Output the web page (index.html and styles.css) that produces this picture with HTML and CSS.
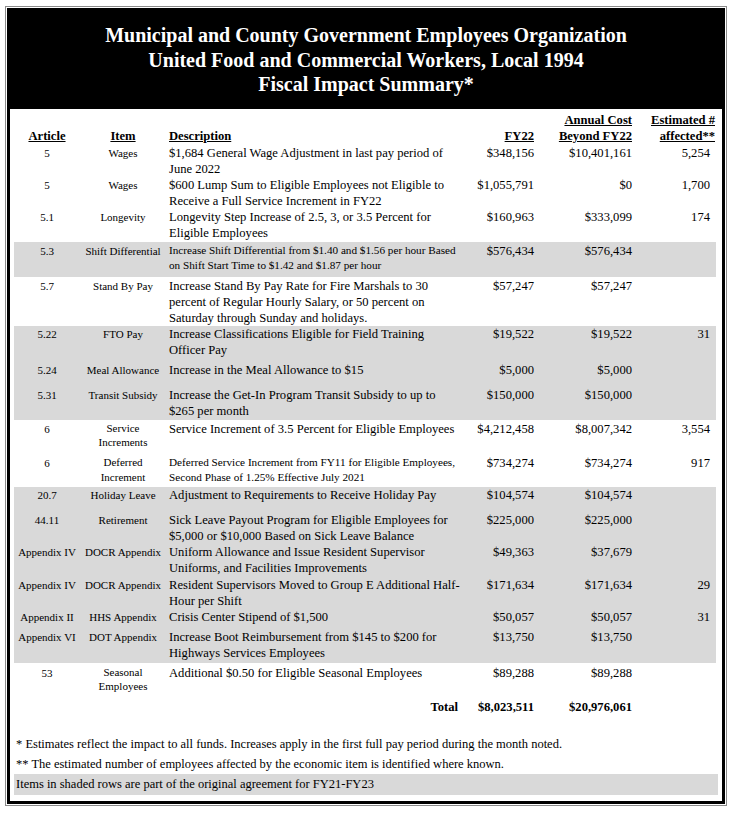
FILE: index.html
```html
<!DOCTYPE html>
<html>
<head>
<meta charset="utf-8">
<link rel="stylesheet" href="styles.css">
</head>
<body>
<div class="frame">
  <div class="box">
    <div class="title">
      <div>Municipal and County Government Employees Organization</div>
      <div>United Food and Commercial Workers, Local 1994</div>
      <div>Fiscal Impact Summary*</div>
    </div>
    <table class="fis">
      <colgroup>
        <col class="c-art"><col class="c-item"><col class="c-desc"><col class="c-fy"><col class="c-ann"><col class="c-est">
      </colgroup>
      <thead>
        <tr class="hdr">
          <th class="ctr"><u>Article</u></th>
          <th class="ctr"><u>Item</u></th>
          <th class="lft"><u>Description</u></th>
          <th class="num"><u>FY22</u></th>
          <th class="num"><u>Annual Cost</u><br><u>Beyond FY22</u></th>
          <th class="num est-h"><u>Estimated #</u><br><u>affected**</u></th>
        </tr>
      </thead>
      <tbody>
        <tr class="r32">
          <td class="sm ctr">5</td><td class="sm ctr">Wages</td>
          <td class="desc">$1,684 General Wage Adjustment in last pay period of<br>June 2022</td>
          <td class="num">$348,156</td><td class="num">$10,401,161</td><td class="num est">5,254</td>
        </tr>
        <tr class="r32">
          <td class="sm ctr">5</td><td class="sm ctr">Wages</td>
          <td class="desc">$600 Lump Sum to Eligible Employees not Eligible to<br>Receive a Full Service Increment in FY22</td>
          <td class="num">$1,055,791</td><td class="num">$0</td><td class="num est">1,700</td>
        </tr>
        <tr class="r33">
          <td class="sm ctr">5.1</td><td class="sm ctr">Longevity</td>
          <td class="desc">Longevity Step Increase of 2.5, 3, or 3.5 Percent for<br>Eligible Employees</td>
          <td class="num">$160,963</td><td class="num">$333,099</td><td class="num est">174</td>
        </tr>
        <tr class="r35 shade p1">
          <td class="sm ctr">5.3</td><td class="sm ctr">Shift Differential</td>
          <td class="desc dsm">Increase Shift Differential from $1.40 and $1.56 per hour Based<br>on Shift Start Time to $1.42 and $1.87 per hour</td>
          <td class="num">$576,434</td><td class="num">$576,434</td><td class="num est"></td>
        </tr>
        <tr class="r49 p1">
          <td class="sm ctr">5.7</td><td class="sm ctr">Stand By Pay</td>
          <td class="desc">Increase Stand By Pay Rate for Fire Marshals to 30<br>percent of Regular Hourly Salary, or 50 percent on<br>Saturday through Sunday and holidays.</td>
          <td class="num">$57,247</td><td class="num">$57,247</td><td class="num est"></td>
        </tr>
        <tr class="r33 shade">
          <td class="sm ctr">5.22</td><td class="sm ctr">FTO Pay</td>
          <td class="desc">Increase Classifications Eligible for Field Training<br>Officer Pay</td>
          <td class="num">$19,522</td><td class="num">$19,522</td><td class="num est">31</td>
        </tr>
        <tr class="r27 shade p3">
          <td class="sm ctr">5.24</td><td class="sm ctr">Meal Allowance</td>
          <td class="desc">Increase in the Meal Allowance to $15</td>
          <td class="num">$5,000</td><td class="num">$5,000</td><td class="num est"></td>
        </tr>
        <tr class="r34 shade p1">
          <td class="sm ctr">5.31</td><td class="sm ctr">Transit Subsidy</td>
          <td class="desc">Increase the Get-In Program Transit Subsidy to up to<br>$265 per month</td>
          <td class="num">$150,000</td><td class="num">$150,000</td><td class="num est"></td>
        </tr>
        <tr class="r34 p1">
          <td class="sm ctr">6</td><td class="sm ctr two">Service<br>Increments</td>
          <td class="desc">Service Increment of 3.5 Percent for Eligible Employees</td>
          <td class="num">$4,212,458</td><td class="num">$8,007,342</td><td class="num est">3,554</td>
        </tr>
        <tr class="r33 p1">
          <td class="sm ctr">6</td><td class="sm ctr two15">Deferred<br>Increment</td>
          <td class="desc dsm">Deferred Service Increment from FY11 for Eligible Employees,<br>Second Phase of 1.25% Effective July 2021</td>
          <td class="num">$734,274</td><td class="num">$734,274</td><td class="num est">917</td>
        </tr>
        <tr class="r23 shade">
          <td class="sm ctr">20.7</td><td class="sm ctr">Holiday Leave</td>
          <td class="desc">Adjustment to Requirements to Receive Holiday Pay</td>
          <td class="num">$104,574</td><td class="num">$104,574</td><td class="num est"></td>
        </tr>
        <tr class="r33 shade p2">
          <td class="sm ctr">44.11</td><td class="sm ctr">Retirement</td>
          <td class="desc">Sick Leave Payout Program for Eligible Employees for<br>$5,000 or $10,000 Based on Sick Leave Balance</td>
          <td class="num">$225,000</td><td class="num">$225,000</td><td class="num est"></td>
        </tr>
        <tr class="r33 shade">
          <td class="sm ctr">Appendix IV</td><td class="sm ctr">DOCR Appendix</td>
          <td class="desc">Uniform Allowance and Issue Resident Supervisor<br>Uniforms, and Facilities Improvements</td>
          <td class="num">$49,363</td><td class="num">$37,679</td><td class="num est"></td>
        </tr>
        <tr class="r32 shade">
          <td class="sm ctr">Appendix IV</td><td class="sm ctr">DOCR Appendix</td>
          <td class="desc">Resident Supervisors Moved to Group E Additional Half-<br>Hour per Shift</td>
          <td class="num">$171,634</td><td class="num">$171,634</td><td class="num est">29</td>
        </tr>
        <tr class="r19 shade">
          <td class="sm ctr">Appendix II</td><td class="sm ctr">HHS Appendix</td>
          <td class="desc">Crisis Center Stipend of $1,500</td>
          <td class="num">$50,057</td><td class="num">$50,057</td><td class="num est">31</td>
        </tr>
        <tr class="r35 shade p1">
          <td class="sm ctr">Appendix VI</td><td class="sm ctr">DOT Appendix</td>
          <td class="desc">Increase Boot Reimbursement from $145 to $200 for<br>Highways Services Employees</td>
          <td class="num">$13,750</td><td class="num">$13,750</td><td class="num est"></td>
        </tr>
        <tr class="r32 p2">
          <td class="sm ctr">53</td><td class="sm ctr two">Seasonal<br>Employees</td>
          <td class="desc">Additional $0.50 for Eligible Seasonal Employees</td>
          <td class="num">$89,288</td><td class="num">$89,288</td><td class="num est"></td>
        </tr>
        <tr class="r26 p4 total">
          <td></td><td></td>
          <td class="tot-lbl">Total</td>
          <td class="num">$8,023,511</td><td class="num">$20,976,061</td><td class="num est"></td>
        </tr>
      </tbody>
    </table>
    <div class="notes">
      <p class="note">* Estimates reflect the impact to all funds. Increases apply in the first full pay period during the month noted.</p>
      <p class="note">** The estimated number of employees affected by the economic item is identified where known.</p>
      <p class="note shaded-note">Items in shaded rows are part of the original agreement for FY21-FY23</p>
    </div>
  </div>
</div>
</body>
</html>
```

FILE: styles.css
```css
html, body {
  margin: 0;
  padding: 0;
  background: #ffffff;
}
body {
  font-family: "Liberation Serif", "Times New Roman", serif;
  color: #000;
}
.frame {
  margin: 6px 0 0 5px;
  width: 718px;
  border: 1px solid #8a8a8a;
  padding: 1px;
}
.box {
  border: 3px solid #000;
  height: 790px;
  box-sizing: content-box;
}
.title {
  background: #000;
  color: #fff;
  text-align: center;
  font-weight: bold;
  font-size: 20px;
  line-height: 24.5px;
  letter-spacing: 0;
  padding: 12px 0 12px;
  height: 74px;
}
.fis {
  border-collapse: collapse;
  table-layout: fixed;
  width: 702px;
  margin: 3px 0 0 4px;
  font-size: 12.6px;
}
.c-art { width: 66px; }
.c-item { width: 86px; }
.c-desc { width: 304px; }
.c-fy { width: 67px; }
.c-ann { width: 98px; }
.c-est { width: 81px; }
.fis th, .fis td {
  padding: 0;
  vertical-align: top;
  white-space: nowrap;
  line-height: 16px;
  font-weight: normal;
}
.fis th {
  font-weight: bold;
  vertical-align: bottom;
}
.hdr { height: 33px; }
.hdr th { padding-bottom: 1px; }
.ctr { text-align: center; }
.lft { text-align: left; padding-left: 3px !important; }
.num { text-align: right; padding-right: 3px !important; }
.est { padding-right: 6px !important; }
.est-h { padding-right: 1px !important; }
.desc { padding-left: 3px !important; }
.sm { font-size: 11px; }
.dsm { font-size: 11.2px; line-height: 15px !important; }
.two { line-height: 14px !important; }
.two15 { line-height: 15px !important; }
.shade td { background: #d9d9d9; }
.r19 { height: 19px; }
.r23 { height: 23px; }
.r26 { height: 26px; }
.r27 { height: 27px; }
.r32 { height: 32px; }
.r33 { height: 33px; }
.r34 { height: 34px; }
.r35 { height: 35px; }
.r49 { height: 49px; }
.p1 td { padding-top: 1px; }
.p2 td { padding-top: 2px; }
.p3 td { padding-top: 3px; }
.p4 td { padding-top: 4px; }
.total td { font-weight: bold; }
.tot-lbl { text-align: right; padding-right: 12px !important; }
.notes {
  margin: 13px 4px 0 4px;
}
.note {
  margin: 0;
  font-size: 12.5px;
  line-height: 20px;
  letter-spacing: 0;
  padding-left: 2px;
}
.shaded-note {
  background: #d9d9d9;
  margin-top: 0;
  line-height: 21px;
}
```
